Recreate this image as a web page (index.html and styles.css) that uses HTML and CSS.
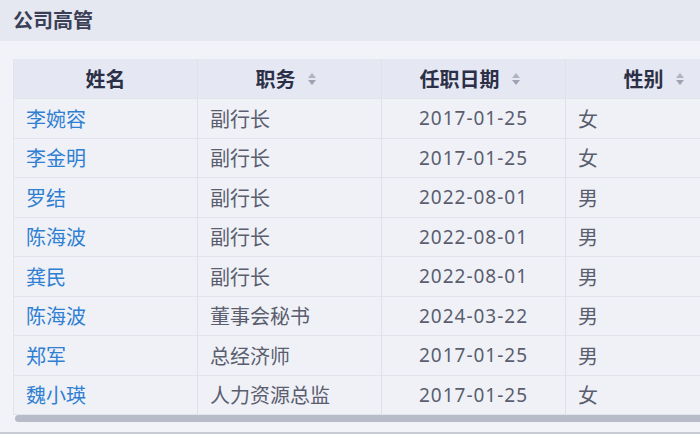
FILE: index.html
```html
<!DOCTYPE html>
<html lang="zh">
<head>
<meta charset="utf-8">
<link rel="stylesheet" href="styles.css">
</head>
<body>
<div class="panel">
  <div class="panel-head">公司高管</div>
  <div class="panel-body">
    <table class="grid">
      <thead>
        <tr>
          <th>姓名</th>
          <th class="sortable"><span class="th-in">职务<span class="sort"><i class="up"></i><i class="down"></i></span></span></th>
          <th class="sortable"><span class="th-in">任职日期<span class="sort"><i class="up"></i><i class="down"></i></span></span></th>
          <th class="sortable"><span class="th-in">性别<span class="sort"><i class="up"></i><i class="down"></i></span></span></th>
        </tr>
      </thead>
      <tbody>
        <tr><td class="name">李婉容</td><td>副行长</td><td class="date">2017-01-25</td><td>女</td></tr>
        <tr><td class="name">李金明</td><td>副行长</td><td class="date">2017-01-25</td><td>女</td></tr>
        <tr><td class="name">罗结</td><td>副行长</td><td class="date">2022-08-01</td><td>男</td></tr>
        <tr><td class="name">陈海波</td><td>副行长</td><td class="date">2022-08-01</td><td>男</td></tr>
        <tr><td class="name">龚民</td><td>副行长</td><td class="date">2022-08-01</td><td>男</td></tr>
        <tr><td class="name">陈海波</td><td>董事会秘书</td><td class="date">2024-03-22</td><td>男</td></tr>
        <tr><td class="name">郑军</td><td>总经济师</td><td class="date">2017-01-25</td><td>男</td></tr>
        <tr><td class="name">魏小瑛</td><td>人力资源总监</td><td class="date">2017-01-25</td><td>女</td></tr>
      </tbody>
    </table>
    <div class="scrollbar"></div>
  </div>
</div>
</body>
</html>
```
FILE: styles.css
```css
html, body {
  margin: 0;
  padding: 0;
  background: #f2f3f8;
  font-family: "Noto Sans", "Noto Sans CJK SC", sans-serif;
  overflow: hidden;
}
.panel {
  width: 700px;
  height: 434px;
  box-sizing: border-box;
  border-bottom: 2px solid #c9cbd4;
  overflow: hidden;
}
.panel-head {
  height: 41px;
  box-sizing: border-box;
  background: #e5e7f1;
  padding-left: 13px;
  font-size: 20px;
  font-weight: 700;
  line-height: 40px;
  color: #3a3f55;
  font-family: "Noto Sans CJK SC", sans-serif;
}
.panel-body {
  padding: 18px 0 0 13px;
}
.grid {
  border-collapse: separate;
  border-spacing: 0;
  table-layout: fixed;
  width: 736px;
  border-left: 1px solid #e2e4ec;
}
.grid th, .grid td {
  width: 184px;
  box-sizing: border-box;
  padding: 0 12px;
  border-right: 1px solid #dfe1ea;
  border-bottom: 1px solid #e2e4ec;
  white-space: nowrap;
}
.grid th {
  height: 40px;
  background: #e5e7f3;
  color: #2b3047;
  font-size: 20px;
  font-weight: 700;
  text-align: center;
  font-family: "Noto Sans CJK SC", sans-serif;
}
.grid th.sortable {
  padding: 0 20px 0 12px;
}
.th-in {
  display: inline-flex;
  align-items: center;
  gap: 12px;
}
.sort {
  display: inline-flex;
  flex-direction: column;
  gap: 2px;
}
.sort i {
  display: block;
  width: 0;
  height: 0;
  border-left: 4.5px solid transparent;
  border-right: 4.5px solid transparent;
}
.sort .up { border-bottom: 5px solid #b0b3c1; }
.sort .down { border-top: 5px solid #9ea2b2; }
.grid td {
  height: 39.5px;
  background: #f0f1f7;
  color: #5a5e6e;
  font-size: 20px;
  font-family: "Noto Sans CJK SC", sans-serif;
}
.grid td.name { color: #2f7fd3; }
.grid td.date {
  text-align: center;
  font-size: 19px;
  font-family: "Noto Sans", sans-serif;
  letter-spacing: 1px;
}
.scrollbar {
  margin-left: 2px;
  height: 7px;
  width: 760px;
  background: #b8bcc8;
  border-radius: 4px 0 0 4px;
}
```
